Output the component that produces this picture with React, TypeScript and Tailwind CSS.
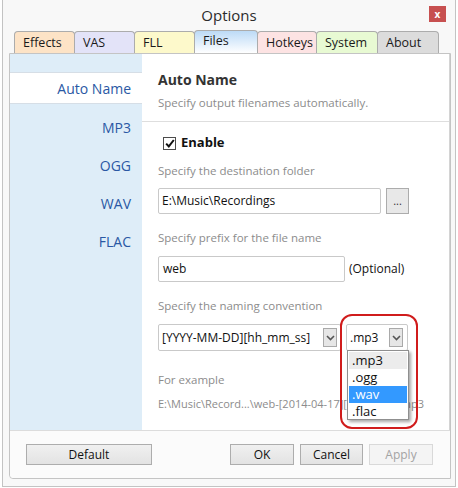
import React from 'react';

const font = { fontFamily: '"Open Sans", "Noto Sans", sans-serif' };

interface Tab {
  label: string;
  width: string;
  bg: string;
  active?: boolean;
}

const tabs: Tab[] = [
  { label: 'Effects', width: 'w-[61px]', bg: 'bg-[#fde3c6]' },
  { label: 'VAS', width: 'w-[61px]', bg: 'bg-[#e3e3f8]' },
  { label: 'FLL', width: 'w-[61px]', bg: 'bg-[#fdf9cb]' },
  { label: 'Files', width: 'w-[64px]', bg: 'bg-gradient-to-b from-[#bcdaf6] to-white', active: true },
  { label: 'Hotkeys', width: 'w-[60px]', bg: 'bg-[#fde3e3]' },
  { label: 'System', width: 'w-[62px]', bg: 'bg-[#e8fad3]' },
  { label: 'About', width: 'w-[62px]', bg: 'bg-[#dcdcdc]' },
];

const sideItems = ['MP3', 'OGG', 'WAV', 'FLAC'];

const Chevron: React.FC = () => (
  <svg width="9" height="6" viewBox="0 0 9 6">
    <path d="M1 1 L4.5 4.5 L8 1" fill="none" stroke="#555" strokeWidth="1.6" />
  </svg>
);

const DropButton: React.FC = () => (
  <div className="w-[14px] h-[19px] border border-[#a9a9a9] bg-[#e6e6e6] flex items-center justify-center">
    <Chevron />
  </div>
);

const Button: React.FC<{ label: string; className: string; disabled?: boolean }> = ({ label, className, disabled }) => (
  <div
    className={
      disabled
        ? `h-[21px] border border-[#d9d9d9] bg-[#f4f4f4] text-[#a3a3a3] text-[12px] flex items-center justify-center ${className}`
        : `h-[21px] border border-[#adadad] bg-gradient-to-b from-[#f0f0f0] to-[#e3e3e3] text-[#111] text-[12px] flex items-center justify-center ${className}`
    }
  >
    {label}
  </div>
);

const App: React.FC = () => {
  return (
    <div className="w-[458px] h-[488px] bg-white relative overflow-hidden" style={font}>
      <div className="absolute inset-x-[2px] top-0 bottom-[1px] border-x border-b border-[#c3c3c3] bg-[#f8f8f8] flex flex-col">
        {/* Title bar */}
        <div className="h-[30px] flex items-center justify-center text-[15px] text-[#2b2b2b] relative">
          Options
          <div className="absolute right-[9px] top-[6px] w-[17px] h-[16px] bg-[#c75050] text-white text-[10px] font-bold flex items-center justify-center leading-none">
            x
          </div>
        </div>

        {/* Tab control */}
        <div className="ml-[6px] w-[442px] flex flex-col">
          <div className="h-[23px] flex items-end pl-[5px]">
            {tabs.map((t) => (
              <div
                key={t.label}
                className={`${t.width} ${t.bg} border border-b-0 border-[#acacac] rounded-t-[4px] -mr-px text-[12.5px] text-[#1a1a1a] pl-[8px] flex items-center ${t.active ? 'h-[23px] pb-[2px] relative z-10' : 'h-[22px] pt-[1px]'}`}
              >
                {t.label}
              </div>
            ))}
          </div>

          <div className="h-[426px] border border-[#c4c4c4] rounded-bl-[4px] bg-white flex flex-col">
            <div className="flex-1 flex border-b border-[#dcdcdc]">
              {/* Sidebar */}
              <div className="w-[132px] bg-[#deedf8] pt-[18px] flex flex-col">
                <div className="h-[32px] bg-white border-y border-[#d6dee6] text-[14px] text-[#2a58a4] flex items-center justify-end pr-[11px]">
                  Auto Name
                </div>
                <div className="pt-[4px] flex flex-col">
                  {sideItems.map((s) => (
                    <div key={s} className="h-[38px] text-[14px] text-[#2a58a4] flex items-center justify-end pr-[11px]">
                      {s}
                    </div>
                  ))}
                </div>
              </div>

              {/* Content */}
              <div className="flex-1 border-r border-[#d4d4d4] relative">
                <div className="h-[68px] border-b border-[#dedede] pl-[16px] pt-[16px]">
                  <div className="text-[14px] font-bold text-[#333] leading-[20px]">Auto Name</div>
                  <div className="text-[11.5px] text-[#8c8c8c] leading-[18px] mt-[4px]">Specify output filenames automatically.</div>
                </div>

                <div className="pl-[16px] pt-[14px] flex flex-col">
                  <div className="h-[14px] flex items-center gap-[5px] pl-[5px]">
                    <div className="w-[13px] h-[13px] border border-[#4c4c4c] bg-white flex items-center justify-center">
                      <svg width="10" height="9" viewBox="0 0 10 9">
                        <path d="M1.2 4.6 L3.8 7.4 L8.8 1" fill="none" stroke="#111" strokeWidth="2" />
                      </svg>
                    </div>
                    <span className="text-[13px] font-bold text-[#111]">Enable</span>
                  </div>

                  <div className="mt-[13px] text-[11.5px] text-[#8c8c8c] leading-[16px]">Specify the destination folder</div>
                  <div className="mt-[9px] flex items-center gap-[5px]">
                    <div className="w-[223px] h-[26px] border border-[#c9c9c9] rounded-[2px] bg-white text-[12px] text-[#111] pl-[3px] flex items-center">
                      E:\Music\Recordings
                    </div>
                    <div className="w-[23px] h-[26px] border border-[#acacac] bg-[#e8e8e8] text-[11px] text-[#333] flex items-center justify-center">
                      ...
                    </div>
                  </div>

                  <div className="mt-[16px] text-[11.5px] text-[#8c8c8c] leading-[16px]">Specify prefix for the file name</div>
                  <div className="mt-[10px] flex items-center gap-[4px]">
                    <div className="w-[187px] h-[26px] border border-[#c9c9c9] rounded-[2px] bg-white text-[12px] text-[#111] pl-[4px] flex items-center">
                      web
                    </div>
                    <span className="text-[12px] text-[#111]">(Optional)</span>
                  </div>

                  <div className="mt-[16px] text-[11.5px] text-[#8c8c8c] leading-[16px]">Specify the naming convention</div>
                  <div className="mt-[10px] flex items-center gap-[5px]">
                    <div className="w-[183px] h-[27px] border border-[#c9c9c9] rounded-[2px] bg-white text-[12px] text-[#111] pl-[3px] pr-[3px] flex items-center justify-between">
                      <span>[YYYY-MM-DD][hh_mm_ss]</span>
                      <DropButton />
                    </div>
                    <div className="w-[62px] h-[27px] border border-[#c9c9c9] rounded-[2px] bg-white text-[12px] text-[#111] pl-[3px] pr-[4px] flex items-center justify-between">
                      <span>.mp3</span>
                      <DropButton />
                    </div>
                  </div>

                  <div className="mt-[21px] text-[11.5px] text-[#8c8c8c] leading-[16px]">For example</div>
                  <div className="mt-[8px] text-[11px] text-[#8c8c8c] leading-[16px] whitespace-nowrap">
                    E:\Music\Record...\web-[2014-04-17][12_05_36].mp3
                  </div>
                </div>

                {/* Red highlight around format selector */}
                <div className="absolute left-[198px] top-[260px] w-[78px] h-[115px] border-2 border-[#d01c1c] rounded-[12px] pointer-events-none z-20" />

                {/* Open dropdown list */}
                <div className="absolute left-[205px] top-[296px] w-[62px] h-[70px] bg-white border border-[#8f8f8f] shadow-[2px_2px_3px_rgba(0,0,0,0.35)] z-10 text-[13px] text-[#111] flex flex-col pt-[1px] px-[1px]">
                  <div className="h-[17px] bg-[#ececec] pl-[3px] flex items-center">.mp3</div>
                  <div className="h-[17px] pl-[3px] flex items-center">.ogg</div>
                  <div className="h-[17px] bg-[#3399ff] text-white pl-[3px] flex items-center">.wav</div>
                  <div className="h-[17px] pl-[3px] flex items-center">.flac</div>
                </div>
              </div>
            </div>

            {/* Bottom buttons */}
            <div className="h-[47px] flex items-center pl-[16px] pr-[17px] bg-[#fbfbfb] rounded-bl-[4px]">
              <Button label="Default" className="w-[126px]" />
              <div className="flex-1" />
              <div className="flex gap-[6px]">
                <Button label="OK" className="w-[64px]" />
                <Button label="Cancel" className="w-[63px]" />
                <Button label="Apply" className="w-[64px]" disabled />
              </div>
            </div>
          </div>
        </div>
      </div>
    </div>
  );
};

export default App;
